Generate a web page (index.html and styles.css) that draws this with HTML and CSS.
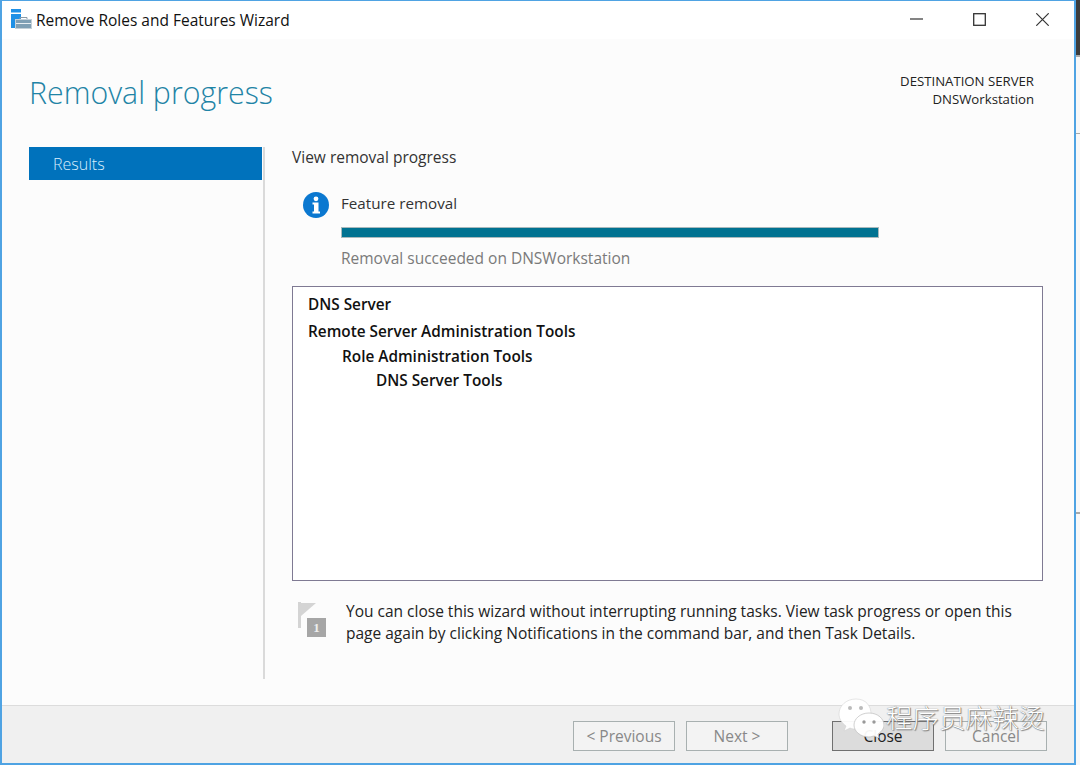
FILE: index.html
```html
<!DOCTYPE html>
<html lang="en">
<head>
    <meta charset="UTF-8">
    <title>Remove Roles and Features Wizard</title>
    <link rel="stylesheet" href="styles.css">
</head>
<body>
    <div class="desktop">
        <div class="window">
            <div class="titlebar">
                <svg class="app-icon" width="22" height="20" viewBox="0 0 22 20">
                    <rect x="0" y="0" width="10" height="3.5" fill="#1e90e6"/>
                    <rect x="0" y="5" width="10" height="14" fill="#1e90e6"/>
                    <rect x="4.5" y="10.5" width="16" height="9" fill="#7f9fb4" stroke="#c4d0d8"/>
                    <path d="M9 10 V8.5 H16 V10" fill="none" stroke="#8a9aa6"/>
                    <path d="M5 14.5 H20" stroke="#e8eef2"/>
                </svg>
                <span class="title-text">Remove Roles and Features Wizard</span>
                <div class="win-controls">
                    <svg class="win-btn" width="13" height="13" viewBox="0 0 13 13"><path d="M0 6 H13" stroke="#333" stroke-width="1.2"/></svg>
                    <svg class="win-btn" width="13" height="13" viewBox="0 0 13 13"><rect x="0.7" y="0.7" width="11.6" height="11.6" fill="none" stroke="#333" stroke-width="1.3"/></svg>
                    <svg class="win-btn" width="13" height="13" viewBox="0 0 13 13"><path d="M0.3 0.3 L12.7 12.7 M12.7 0.3 L0.3 12.7" stroke="#333" stroke-width="1.2"/></svg>
                </div>
            </div>

            <div class="header">
                <h1>Removal progress</h1>
                <div class="destination">
                    <div>DESTINATION SERVER</div>
                    <div>DNSWorkstation</div>
                </div>
            </div>

            <div class="content">
                <div class="sidebar">
                    <div class="nav-item">Results</div>
                </div>
                <div class="main">
                    <div class="section-label">View removal progress</div>
                    <div class="status">
                        <svg class="info-icon" width="26" height="26" viewBox="0 0 26 26">
                            <circle cx="13" cy="13" r="13" fill="#0b78d0"/>
                            <circle cx="13" cy="6.8" r="2.4" fill="#fff"/>
                            <path d="M9.5 10.5 H15.5 V19.5 H17 V21.5 H9.5 V19.5 H11 V12.5 H9.5 Z" fill="#fff"/>
                        </svg>
                        <div class="status-body">
                            <div class="status-title">Feature removal</div>
                            <div class="progress"><div class="progress-fill"></div></div>
                            <div class="status-result">Removal succeeded on DNSWorkstation</div>
                        </div>
                    </div>
                    <div class="result-box">
                        <div class="result-row">DNS Server</div>
                        <div class="result-row gap-top">Remote Server Administration Tools</div>
                        <div class="result-row indent-1">Role Administration Tools</div>
                        <div class="result-row indent-2">DNS Server Tools</div>
                    </div>
                    <div class="note">
                        <svg class="flag-icon" width="32" height="36" viewBox="0 0 32 36">
                            <rect x="1" y="0" width="3" height="26" fill="#d4d4d4"/>
                            <path d="M4 1 H19 L4 14 Z" fill="#d4d4d4"/>
                            <rect x="10" y="16" width="19" height="19" fill="#a6a6a6"/>
                            <text x="19.5" y="30" class="flag-num">1</text>
                        </svg>
                        <p>You can close this wizard without interrupting running tasks. View task progress or open this page again by clicking Notifications in the command bar, and then Task Details.</p>
                    </div>
                </div>
            </div>

            <div class="footer">
                <button class="btn" disabled>&lt; Previous</button>
                <button class="btn btn-next" disabled>Next &gt;</button>
                <button class="btn btn-close">Close</button>
                <button class="btn btn-cancel" disabled>Cancel</button>
            </div>
        </div>

        <div class="desktop-strip">
            <div class="strip-dark"></div>
            <div class="strip-panel"></div>
            <div class="strip-panel strip-tall"></div>
            <div class="strip-panel strip-last"></div>
        </div>

        <div class="watermark">
            <svg width="46" height="40" viewBox="0 0 46 40">
                <path d="M18 1 C8 1 1 8 1 16 C1 21 4 25 8 28 L6 33 L12 30 C14 31 16 31 18 31 C28 31 33 24 33 16 C33 8 28 1 18 1 Z" fill="#fff" fill-opacity="0.95" stroke="#ccc" stroke-width="0.5"/>
                <path d="M31 15 C22 15 16 21 16 27 C16 33 22 39 31 39 C33 39 35 38 36 38 L41 40 L40 36 C43 34 46 31 46 27 C46 21 40 15 31 15 Z" fill="#fff" fill-opacity="0.95" stroke="#bbb" stroke-width="0.7"/>
                <circle cx="12" cy="10" r="2" fill="#bbb"/>
                <circle cx="23" cy="10" r="2" fill="#bbb"/>
                <circle cx="26" cy="24" r="1.7" fill="#999"/>
                <circle cx="36" cy="24" r="1.7" fill="#999"/>
            </svg>
            <span>程序员麻辣烫</span>
        </div>
    </div>
</body>
</html>
```

FILE: styles.css
```css
html, body {
    margin: 0;
    padding: 0;
}

body {
    font-family: "Open Sans", "Noto Sans", "Noto Sans CJK SC", sans-serif;
    background-color: #fff;
    color: #222;
}

.desktop {
    position: relative;
    display: flex;
    width: 1080px;
    height: 765px;
    overflow: hidden;
}

.window {
    width: 1076px;
    height: 765px;
    box-sizing: border-box;
    border: 2px solid #4fa3e3;
    border-width: 1px 2px 2px 2px;
    display: flex;
    flex-direction: column;
    background: #fcfcfc;
}

/* bit of the desktop behind the window */
.desktop-strip {
    width: 4px;
    display: flex;
    flex-direction: column;
}

.strip-dark {
    height: 55px;
    background: #3c3c3c;
}

.strip-panel {
    height: 76px;
    border-top: 2px solid #a9a9a9;
    background: #f8f8f8;
}

.strip-tall {
    height: 378px;
    border-top-width: 1px;
}

.strip-last {
    flex: 1;
}

/* title bar */
.titlebar {
    height: 38px;
    flex-shrink: 0;
    display: flex;
    align-items: center;
    background: #fff;
    padding-left: 9px;
}

.app-icon {
    margin-top: -2px;
    margin-right: 3px;
}

.title-text {
    font-size: 15.5px;
    color: #111;
}

.win-controls {
    margin-left: auto;
    display: flex;
    align-items: center;
    gap: 50px;
    padding-right: 25px;
    margin-top: -1px;
}

/* header */
.header {
    height: 108px;
    flex-shrink: 0;
    display: flex;
    justify-content: space-between;
    box-sizing: border-box;
    padding: 0 40px 0 27px;
}

h1 {
    margin: 34px 0 0;
    font-size: 30.3px;
    font-weight: 300;
    line-height: 40px;
    color: #1f84a6;
}

.destination {
    margin-top: 33px;
    text-align: right;
    font-size: 13.2px;
    line-height: 18px;
    color: #222;
}

/* body */
.content {
    flex: 1;
    display: flex;
    min-height: 0;
}

.sidebar {
    width: 233px;
    margin-left: 27px;
    margin-right: 1px;
    flex-shrink: 0;
}

.nav-item {
    height: 33px;
    line-height: 35px;
    padding-left: 24px;
    background: #0072bc;
    color: #d8eefc;
    font-size: 16px;
    font-weight: 300;
}

.main {
    flex: 1;
    border-left: 2px solid #dadada;
    height: 532px;
    box-sizing: border-box;
    padding-left: 27px;
    margin-right: 31px;
}

.section-label {
    font-size: 15.5px;
    line-height: 20px;
    color: #333;
}

.status {
    display: flex;
    margin-top: 26px;
    padding-left: 11px;
}

.info-icon {
    margin-top: -1px;
    margin-right: 12px;
    flex-shrink: 0;
}

.status-title {
    font-size: 15.2px;
    line-height: 20px;
    color: #333;
}

.progress {
    width: 538px;
    height: 11px;
    box-sizing: border-box;
    margin-top: 14px;
    border: 1px solid #a9b9bc;
    background: #fff;
}

.progress-fill {
    height: 100%;
    background: #007291;
}

.status-result {
    margin-top: 10px;
    font-size: 15.5px;
    line-height: 20px;
    color: #7a7a7a;
}

.result-box {
    height: 295px;
    box-sizing: border-box;
    margin-top: 18px;
    border: 1px solid #7f7a93;
    background: #fff;
    padding: 7px 15px;
}

.result-row {
    font-size: 15.35px;
    font-weight: 600;
    line-height: 20px;
    margin-bottom: 4.5px;
    color: #111;
}

.gap-top {
    margin-top: 7px;
}

.indent-1 {
    padding-left: 34px;
}

.indent-2 {
    padding-left: 68px;
}

.note {
    display: flex;
    margin-top: 19px;
    padding-left: 5px;
}

.flag-icon {
    margin-top: 2px;
    margin-right: 17px;
    flex-shrink: 0;
}

.flag-num {
    font-family: "Liberation Serif", serif;
    font-size: 13px;
    font-weight: bold;
    fill: #eee;
    text-anchor: middle;
}

.note p {
    margin: 0;
    width: 680px;
    font-size: 15.5px;
    line-height: 22px;
    color: #222;
}

/* footer */
.footer {
    height: 58px;
    flex-shrink: 0;
    box-sizing: border-box;
    display: flex;
    justify-content: flex-end;
    padding: 15px 27px 0 0;
    border-top: 1px solid #dcdcdc;
    background: #f0f0f0;
}

.btn {
    width: 102px;
    height: 30px;
    box-sizing: border-box;
    border: 1px solid #a8b0b0;
    background: #f3f3f3;
    font-family: inherit;
    font-size: 15.5px;
    color: #888;
    padding: 0;
}

.btn-next {
    margin-left: 11px;
}

.btn-close {
    margin-left: 44px;
    border-color: #707070;
    background: #dcdcdc;
    color: #222;
}

.btn-cancel {
    margin-left: 11px;
}

/* watermark over the footer */
.watermark {
    position: absolute;
    left: 838px;
    top: 698px;
    display: flex;
    align-items: center;
}

.watermark span {
    margin-left: 2px;
    margin-top: -4px;
    font-family: "Noto Sans CJK SC", sans-serif;
    font-size: 26.5px;
    font-weight: 300;
    color: #fff;
    text-shadow: 0 0 1px #555, 1px 1px 1px #888;
}
```
